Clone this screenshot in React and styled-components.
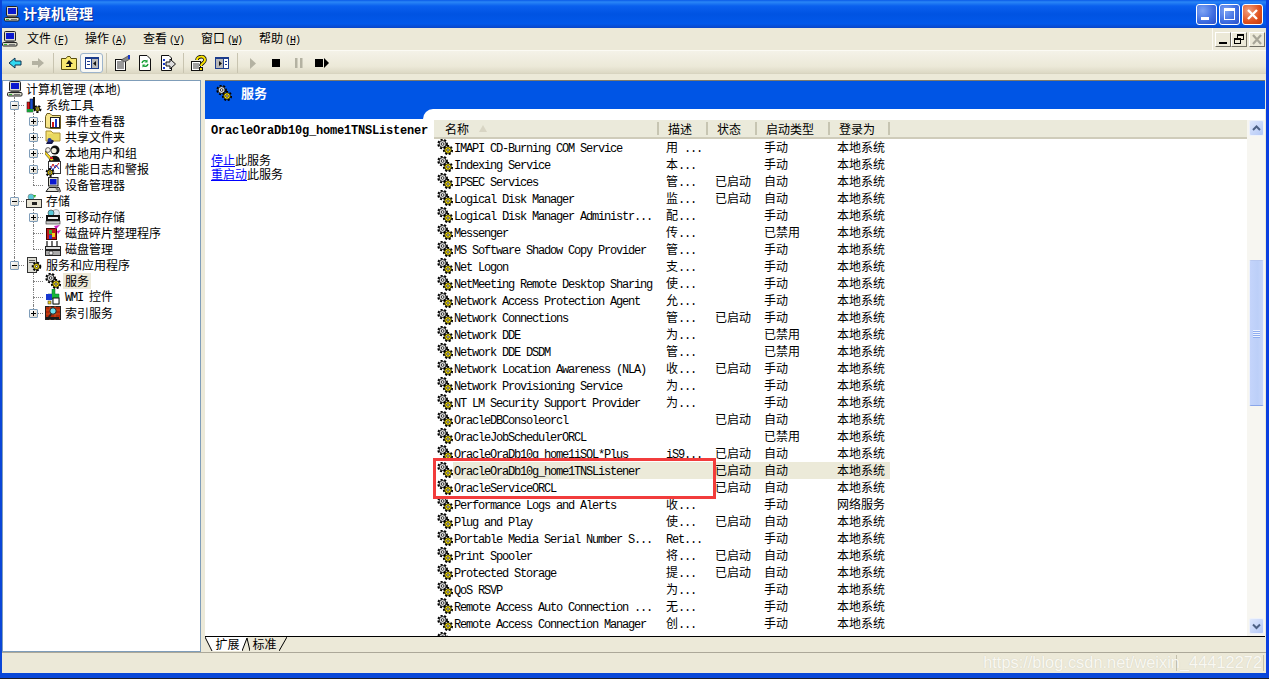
import React from "react";
import styled, { createGlobalStyle } from "styled-components";

const Global = createGlobalStyle`
  html, body { margin: 0; padding: 0; background: #1c1c24; overflow: hidden; }
  body { font-family: "Noto Sans CJK SC", "Liberation Sans", sans-serif; font-size: 12px; color: #000; }
`;

const Win = styled.div`
  width: 1269px; height: 678px; box-sizing: border-box; display: flex; flex-direction: column;
  background: #ece9d8; border-left: 2px solid #0a46d8; border-right: 3px solid #0a3fe0; border-bottom: 5px solid #0847d8;
  position: relative; overflow: hidden;
`;
const TitleBar = styled.div`
  height: 28px; margin-left: -2px; margin-right: -3px; flex: none; display: flex; align-items: center; padding: 0 6px 0 4px;
  background: linear-gradient(#0a5ae8 0, #2a86f6 2px, #0a60ee 6px, #0053e2 50%, #0258ea 85%, #0a46c8 100%);
`;
const TitleText = styled.div`
  color: #fff; font-size: 14px; font-weight: 700; line-height: 26px; margin: -2px 0 0 3px; flex: 1;
  text-shadow: 1px 1px 0 #0a2a90;
`;
const CapBtn = styled.div`
  width: 21px; height: 21px; box-sizing: border-box; margin-left: 2px; border: 1px solid #fff; border-radius: 3px;
  display: flex; align-items: center; justify-content: center;
  background: ${p => p.$close
    ? "radial-gradient(circle at 30% 30%, #f0a080, #e0501c 60%, #c03a10)"
    : "radial-gradient(circle at 30% 30%, #7ea4f4, #3d6ce0 60%, #2c50c8)"};
`;

const MenuBar = styled.div`
  height: 23px; flex: none; box-sizing: border-box; display: flex; align-items: center; border-bottom: 1px solid #fbfaf4;
`;
const MenuIconBox = styled.div`
  width: 25px; height: 16px; display: flex;
`;
const MenuItem = styled.div`
  width: 40px; margin-right: 18px; white-space: nowrap; line-height: 22px;
`;
const Mnemonic = styled.span`
  font-family: "Liberation Mono", monospace; font-size: 10px; letter-spacing: -1px; margin-left: 2px;
`;
const MenuFill = styled.div`flex: 1;`;
const MdiGroup = styled.div`
  height: 22px; display: flex; align-items: center; padding: 0 1px 0 2px; border-left: 1px solid #fbfaf4;
`;
const MdiBtn = styled.div`
  width: 16px; height: 15px; box-sizing: border-box; display: flex; align-items: center; justify-content: center;
  background: #ece9d8; border: 1px solid; border-color: #fff #716f64 #716f64 #fff;
  margin-left: ${p => p.$gap ? "2px" : "0"};
`;

const ToolBar = styled.div`
  height: 23px; flex: none; display: flex; align-items: center; padding: 2px 0 0 1px; box-sizing: border-box;
  background: linear-gradient(#f4f2e8, #ece9d8 70%, #dcd8c4);
  border-bottom: 1px solid #d8d4c0;
`;
const ToolBtn = styled.div`
  width: 23px; height: 20px; box-sizing: border-box; display: flex; align-items: center; justify-content: center;
  ${p => p.$active && "background:#f8f8f4; border:1px solid #9db4cc; border-radius:3px;"}
`;
const ToolSep = styled.div`
  width: ${p => p.$w || 8}px; height: 20px; display: flex; justify-content: center;
  &::before { content: ""; width: 1px; background: #c8c4b0; }
`;

const Panes = styled.div`
  flex: 1; min-height: 0; margin-top: 6px; display: flex; padding-right: 1px;
`;
const Tree = styled.div`
  width: 199px; flex: none; box-sizing: border-box; background: #fff; border: 1px solid #7f9db9;
  overflow: hidden;
`;
const Splitter = styled.div`width: 4px; flex: none;`;
const Right = styled.div`
  flex: 1; min-width: 0; display: flex; flex-direction: column; border-top: 1px solid #7c7a6c;
`;
const Banner = styled.div`
  height: 28px; flex: none; background: #0055e5; display: flex; align-items: center; padding-left: 11px; gap: 9px;
`;
const BannerIcon = styled.div`
  width: 16px; height: 16px; margin-top: -4px;
`;
const BannerTitle = styled.div`
  color: #fff; font-weight: 700; font-size: 13px; line-height: 26px; margin-top: -4px;
`;
const Body = styled.div`
  flex: 1; min-height: 0; display: flex; background: #0055e5;
`;
const Desc = styled.div`
  width: 218px; flex: none; background: #fff; margin-top: 10px; padding: 0 0 0 6px; box-sizing: border-box; white-space: nowrap;
  position: relative; z-index: 1;
`;
const DescTitle = styled.div`
  font-family: "Liberation Mono", monospace; font-weight: 700; font-size: 12px; letter-spacing: -0.2px; line-height: 17px; margin-top: 4px;
`;
const DescLines = styled.div`
  margin-top: 13px; line-height: 14px; font-size: 12px;
`;
const DescLine = styled.div`
  height: 14px; display: flex;
`;
const Link = styled.a`color: #0000ff; text-decoration: underline; display: block; height: 14px;`;
const ListPane = styled.div`
  flex: 1; min-width: 0; background: #fff; border-top-left-radius: 10px; padding: 11px 0 0 11px; display: flex; position: relative;
`;
const ListMain = styled.div`
  flex: 1; min-width: 0; display: flex; flex-direction: column;
`;
const Header = styled.div`
  height: 19px; flex: none; box-sizing: border-box; display: grid; grid-template-columns: 225px 49px 49px 73px 60px 1fr;
  background: #ebeadb; border-bottom: 2px solid #cfccba; 
`;
const HeadCell = styled.div`
  box-sizing: border-box; padding-left: ${p => p.$first ? 11 : 9}px; line-height: 17px; height: 17px; display: flex; align-items: center;
  border-right: ${p => p.$last ? "none" : "2px solid"}; border-image: linear-gradient(#ebeadb 3px, #c7c5b2 3px, #c7c5b2 14px, #ebeadb 14px) 1;
`;
const SortMark = styled.span`
  margin-left: 10px; width: 0; height: 0; border-left: 4px solid transparent; border-right: 4px solid transparent; border-bottom: 7px solid #d8d5c4;
`;
const Rows = styled.div`flex: 1; min-height: 0; overflow: hidden;`;
const Row = styled.div`
  height: 17px; display: grid; grid-template-columns: 19px 206px 49px 49px 73px 60px; white-space: nowrap;
`;
const RowIcon = styled.div`
  padding-left: 3px; height: 17px; background: #fff;
`;
const Cell = styled.div`
  height: 17px; line-height: 15px; padding-left: ${p => p.$pad || 1}px;
  background: ${p => p.$sel ? "#ecead9" : "transparent"};
`;
const RedBox = styled.div`
  position: absolute; left: 10px; top: 349px; width: 283px; height: 41px; box-sizing: border-box; border: 3px solid #f23c3c; pointer-events: none;
`;
const Scroll = styled.div`
  width: 18px; flex: none; display: flex; flex-direction: column; align-items: center; background: #f7f6f1; padding: 0 0 2px 0;
`;
const ScrollBtn = styled.div`
  width: 15px; height: 16px; flex: none; box-sizing: border-box; border: 1px solid #eef2fb; border-radius: 2px;
  background: linear-gradient(135deg, #dfe8fd, #b4c8f6); display: flex; align-items: center; justify-content: center;
`;
const ScrollGap = styled.div`height: ${p => p.$h}px; flex: ${p => p.$h ? "none" : 1};`;
const Thumb = styled.div`
  width: 15px; height: 146px; flex: none; box-sizing: border-box; border: 1px solid #eef2fb; border-bottom-color: #8aa6ea; border-top-color:#b8c8f0; border-radius: 2px;
  background: linear-gradient(90deg, #c4d4fb, #bccff8 60%, #c8d6fa); display: flex; flex-direction: column; align-items: center; justify-content: center; gap: 1px;
`;
const Grip = styled.i`
  display: block; width: 7px; height: 1px; background: #eef3fe; box-shadow: 0 1px 0 #8fadf0;
`;
const TabStrip = styled.div`
  height: 15px; flex: none; display: flex; border-top: 1px solid #000; background: #ece9d8;
`;
const TabA = styled.div`
  width: 29px; height: 14px; display: flex; align-items: center; justify-content: center; background: #fff; line-height: 14px;
`;
const TabB = styled.div`
  width: 29px; height: 14px; display: flex; align-items: center; justify-content: center; line-height: 14px;
`;
const Slash = styled.svg`flex: none; display: block;`;
const StatusBar = styled.div`
  height: 21px; flex: none; box-sizing: border-box; display: flex; border-top: 1px solid #aca899; background: #ece9d8;
`;
const StatusPane = styled.div`
  flex: ${p => p.$flex ? 1 : "none"}; width: ${p => p.$w || 0}px; border-right: 1px solid #c4c0ac;
  margin: 2px 2px 2px 0;
`;
const Watermark = styled.div`
  position: absolute; right: 4px; bottom: 1px; font-family: "Liberation Sans", sans-serif; font-size: 16.4px; line-height: 20px;
  color: rgba(252,251,246,.95); text-shadow: 0 0 1px rgba(150,150,135,.35); white-space: nowrap; pointer-events: none;
`;
const Latin = styled.span`
  font-family: "Liberation Mono", monospace; font-size: 12px; letter-spacing: -1.2px;
`;

const TreeRowBox = styled.div`
  height: 16px; display: flex; align-items: center; padding-left: 2px; white-space: nowrap;
`;
const Guide = styled.div`
  width: 19px; height: 16px; flex: none; position: relative;
  ${p => (p.$line === "through" || p.$line === "branch") && `
    &::before { content:""; position:absolute; left:9px; top:0; bottom:0; border-left:1px dotted #808080; }`}
  ${p => p.$line === "last" && `
    &::before { content:""; position:absolute; left:9px; top:0; height:8px; border-left:1px dotted #808080; }`}
  ${p => (p.$line === "branch" || p.$line === "last") && `
    &::after { content:""; position:absolute; left:9px; top:8px; width:10px; border-top:1px dotted #808080; }`}
`;
const Exp = styled.div`
  position: absolute; left: 5px; top: 4px; width: 9px; height: 9px; box-sizing: border-box; border: 1px solid #7f9db9; border-radius: 1px; background: linear-gradient(135deg, #fff, #dcd8cc); z-index: 1;
  display: flex; align-items: center; justify-content: center;
`;
const IconBox = styled.div`
  width: 16px; height: 16px; flex: none; margin-left: 2px;
`;
const TreeLabel = styled.div`
  line-height: 16px; padding: 0 ${p => p.$sel ? "2px" : "0"}; margin-left: ${p => p.$sel ? "2px" : (p.$m ?? 4) + "px"};
  background: ${p => p.$sel ? "#ece9d8" : "transparent"};
`;

const Sv = ({ s = 16, children, w, h }) => (
  <svg width={w || s} height={h || s} viewBox={`0 0 ${w || s} ${h || s}`} style={{ display: "block" }}>{children}</svg>
);

const Computer = () => (
  <Sv>
    <rect x="2.5" y="0.5" width="11" height="9.5" rx="1" fill="#d8d8d0" stroke="#222" />
    <rect x="4" y="2" width="8" height="6" fill="#0a18d0" />
    <rect x="4" y="10" width="8" height="1" fill="#555" />
    <rect x="0.5" y="11.5" width="14.5" height="3.5" rx="1" fill="#d8d8c8" stroke="#222" />
    <rect x="2" y="13" width="3" height="1" fill="#3a3" />
    <rect x="7" y="13" width="6" height="1" fill="#777" />
  </Sv>
);
const Cog = ({ cx, cy, r, fill }) => (
  <g>
    <circle cx={cx} cy={cy} r={r + 0.6} fill="none" stroke="#000" strokeWidth="2.4" strokeDasharray="1.9 1.5" />
    <circle cx={cx} cy={cy} r={r} fill={fill} stroke="#111" strokeWidth="0.9" />
    <circle cx={cx} cy={cy} r={r * 0.38} fill="#fff" stroke="#111" strokeWidth="0.8" />
  </g>
);
const Gears = () => (
  <Sv>
    <Cog cx={5.6} cy={5} r={3.5} fill="#d8d8d8" />
    <Cog cx={11} cy={11} r={3.3} fill="#ffe600" />
  </Sv>
);
const Tools = () => (
  <Sv>
    <rect x="1" y="5" width="3" height="10" fill="#d81818" stroke="#000" strokeWidth=".5" />
    <rect x="4" y="2" width="3" height="13" fill="#1a50d0" stroke="#000" strokeWidth=".5" />
    <rect x="7" y="0" width="2" height="12" fill="#111" />
    <rect x="1" y="12" width="6" height="3" fill="#18a038" />
    <Cog cx={11.5} cy={12} r={2.2} fill="#ffe600" />
  </Sv>
);
const EventView = () => (
  <Sv>
    <path d="M0.5 3.5 L0.5 14.5 L6 15.5 L15.5 15.5 L15.5 2.5 L7 2.5 L5 0.5 L2 0.5 Z" fill="#f6e58a" stroke="#6a5a20" />
    <rect x="5.5" y="4.5" width="9" height="10" fill="#fff" stroke="#222" />
    <rect x="7" y="9" width="2" height="5" fill="#d01818" />
    <rect x="10" y="6" width="2" height="8" fill="#1838c8" />
  </Sv>
);
const Share = () => (
  <Sv>
    <path d="M1 2 L6 2 L8 4 L15 4 L15 12 L1 12 Z" fill="#f6e070" stroke="#a89030" />
    <rect x="3" y="5" width="11" height="6" fill="#e8d860" />
    <path d="M1 15 C3 10 7 10 9 12 L7 15 Z" fill="#16184a" />
    <circle cx="4.5" cy="11" r="2" fill="#2038a0" />
  </Sv>
);
const Users = () => (
  <Sv>
    <circle cx="10" cy="5" r="4.5" fill="#111" />
    <circle cx="9" cy="5.5" r="2.6" fill="#f4f0e0" />
    <path d="M4 16 C4 9 15 9 15 16 Z" fill="#111" />
    <path d="M0 6 L9 15 L6 16 L0 9 Z" fill="#f0d020" stroke="#222" strokeWidth=".5" />
    <circle cx="3" cy="5" r="2.4" fill="#f8f4ec" stroke="#222" strokeWidth=".7" />
    <rect x="5" y="12" width="3" height="2" fill="#d02020" />
  </Sv>
);
const Perf = () => (
  <Sv>
    <rect x="3.5" y="0.5" width="12" height="12" fill="#fff" stroke="#333" />
    <path d="M5 9 L8 3 L10 7 L14 2" stroke="#d01818" strokeWidth="1" fill="none" />
    <path d="M5 5 L8 9 L11 4 L14 8" stroke="#1838c8" strokeWidth="1" fill="none" />
    <Cog cx={5} cy={11.5} r={2.6} fill="#ffe600" />
  </Sv>
);
const Device = () => (
  <Sv>
    <rect x="3.5" y="0.5" width="9.5" height="8.5" fill="#d8d8d0" stroke="#222" />
    <rect x="5" y="2" width="6.5" height="5.5" fill="#0a18d0" />
    <path d="M1 14.5 L4 10.5 L14 10.5 L15.5 14.5 Z" fill="#e0e0d8" stroke="#222" />
    <path d="M11 11 L15 15" stroke="#777" strokeWidth="2" />
  </Sv>
);
const Storage = () => (
  <Sv>
    <circle cx="5" cy="4" r="3" fill="#58c8d8" stroke="#777" strokeWidth=".6" />
    <path d="M7 2 L10 2 L9 5 Z" fill="#30b030" />
    <rect x="0.5" y="6.5" width="15" height="8" fill="#e8e4d4" stroke="#333" />
    <rect x="6" y="9" width="5" height="3" fill="#222" />
  </Sv>
);
const Removable = () => (
  <Sv>
    <circle cx="11" cy="4" r="3.5" fill="#e0e8f0" stroke="#777" strokeWidth=".6" />
    <circle cx="6" cy="4" r="3" fill="#58c8d8" stroke="#333" strokeWidth=".6" />
    <rect x="1" y="6" width="14" height="6" fill="#111" />
    <rect x="3" y="8" width="10" height="2" fill="#eee" />
    <rect x="1" y="12" width="14" height="3" fill="#ccc" stroke="#222" strokeWidth=".6" />
  </Sv>
);
const Defrag = () => (
  <Sv>
    <rect x="1.5" y="3.5" width="10" height="11" fill="#c01818" stroke="#400" />
    <rect x="4" y="5" width="3" height="4" fill="#38b038" />
    <rect x="7" y="8" width="3" height="4" fill="#f0d020" />
    <rect x="4" y="10" width="3" height="4" fill="#2838c8" />
    <path d="M9 1 L15 0 L11 4 Z M12 6 L16 5 L13 9 Z" fill="#d020c0" />
  </Sv>
);
const DiskMgr = () => (
  <Sv>
    <path d="M2 0 L2 6 M7 0 L7 6 M12 0 L12 6" stroke="#111" strokeWidth="1.2" />
    <rect x="0.5" y="5.5" width="15" height="3" fill="#ddd" stroke="#222" />
    <rect x="0.5" y="9.5" width="15" height="5" fill="#aaa" stroke="#222" />
    <circle cx="6" cy="12" r="2" fill="#eee" stroke="#222" strokeWidth=".6" />
  </Sv>
);
const SvcApps = () => (
  <Sv>
    <rect x="1.5" y="0.5" width="9" height="15" fill="#dcdcd4" stroke="#333" />
    <rect x="3" y="3" width="6" height="1" fill="#555" />
    <rect x="3" y="5" width="6" height="1" fill="#555" />
    <Cog cx={10.5} cy={9.5} r={3} fill="#ffe600" />
  </Sv>
);
const Wmi = () => (
  <Sv>
    <path d="M7 0 L10 0 L10 5 L14 5 L14 15 L8 15 L8 10 L3 10 L3 5 L7 5 Z" fill="#18b838" stroke="#063" strokeWidth=".5" />
    <rect x="1" y="5" width="6" height="6" fill="#1838d0" />
    <rect x="8" y="9" width="6" height="6" fill="#fff" stroke="#111" />
    <rect x="3" y="12" width="3" height="3" fill="#f0d020" stroke="#222" strokeWidth=".5" />
  </Sv>
);
const Index = () => (
  <Sv>
    <rect x="0.5" y="1.5" width="15" height="13" fill="#b02808" stroke="#222" />
    <path d="M1 5 H15 M1 9 H15 M5 1 V15 M10 1 V15" stroke="#e06020" strokeWidth=".7" />
    <circle cx="8" cy="6" r="3.2" fill="#70e0f0" stroke="#222" />
    <path d="M3 14 L6 9" stroke="#222" strokeWidth="2" />
    <rect x="1" y="12" width="13" height="2" fill="#1a1a1a" />
  </Sv>
);

const Arrow = ({ fill, stroke, flip }) => (
  <Sv>
    <path d={flip ? "M2 6 H8 V3 L14 8 L8 13 V10 H2 Z" : "M14 6 H8 V3 L2 8 L8 13 V10 H14 Z"} fill={fill} stroke={stroke} />
  </Sv>
);
const UpFolder = () => (
  <Sv>
    <path d="M0.5 3.5 L5 3.5 L6.5 1.5 L9 1.5 L10 3.5 L15.5 3.5 L15.5 14.5 L0.5 14.5 Z" fill="#f8e870" stroke="#5a5010" />
    <path d="M8 5 L12 9 L10 9 L10 12 L5 12 L5 11 L8 11 L8 9 L5 9 Z" fill="#111" />
  </Sv>
);
const TreeToggle = () => (
  <Sv>
    <rect x="1" y="2" width="14" height="12" fill="#1c3c8c" />
    <rect x="2" y="4" width="5" height="9" fill="#fff" />
    <rect x="8" y="4" width="6" height="9" fill="#b8b8b8" />
    <path d="M12 6 L9 8.5 L12 11 Z" fill="#111" />
    <rect x="3" y="6" width="3" height="1" fill="#1c3c8c" />
    <rect x="3" y="9" width="3" height="1" fill="#1c3c8c" />
  </Sv>
);
const Props = () => (
  <Sv>
    <rect x="1.5" y="4.5" width="10" height="11" fill="#fff" stroke="#111" />
    <path d="M3 7 H10 M3 9 H10 M3 11 H10 M3 13 H10" stroke="#333" />
    <path d="M7 5 L14 1 L16 2 L16 4 L11 7 Z" fill="#888" stroke="#222" strokeWidth=".5" />
    <rect x="14" y="0" width="2" height="4" fill="#1838c8" />
  </Sv>
);
const Refresh = () => (
  <Sv>
    <path d="M2.5 0.5 H10 L13.5 4 V15.5 H2.5 Z" fill="#fff" stroke="#111" />
    <path d="M5 8 A3 3 0 0 1 10 6.5 M11 9 A3 3 0 0 1 6 10.5" stroke="#18a038" strokeWidth="1.4" fill="none" />
    <path d="M10.5 4.5 V7.5 H7.5 Z M5.5 12.5 V9.5 H8.5 Z" fill="#18a038" />
  </Sv>
);
const Export = () => (
  <Sv>
    <path d="M1.5 0.5 H9 L11.5 3 V15.5 H1.5 Z" fill="#fff" stroke="#111" />
    <rect x="3" y="4" width="2" height="2" fill="#1838c8" />
    <rect x="3" y="8" width="2" height="2" fill="#1838c8" />
    <rect x="3" y="12" width="2" height="2" fill="#1838c8" />
    <path d="M6 7 H10 V4 L15.5 9 L10 14 V11 H6 Z" fill="#ddd" stroke="#111" />
  </Sv>
);
const Help = () => (
  <Sv>
    <rect x="0.5" y="6.5" width="9" height="9" fill="#fff" stroke="#111" />
    <path d="M2 9 H8 M2 11 H8 M2 13 H8" stroke="#444" />
    <path d="M6 5 C6 1 14 0 14 5 C14 8 10 8 10 11" fill="none" stroke="#111" strokeWidth="3.6" />
    <path d="M6 5 C6 1 14 0 14 5 C14 8 10 8 10 11" fill="none" stroke="#fbe400" strokeWidth="2" />
    <rect x="8.5" y="12.5" width="3" height="3" fill="#fbe400" stroke="#111" />
  </Sv>
);
const Mmc = () => (
  <Sv>
    <rect x="1" y="2" width="14" height="12" fill="#1c3c8c" />
    <rect x="2" y="4" width="7" height="9" fill="#b8b8b8" />
    <rect x="10" y="4" width="4" height="9" fill="#fff" />
    <path d="M5 6 L8 8.5 L5 11 Z" fill="#111" />
    <rect x="11" y="6" width="2" height="1" fill="#1c3c8c" />
    <rect x="11" y="9" width="2" height="1" fill="#1c3c8c" />
  </Sv>
);
const Play = () => <Sv><path d="M5 3 L11 8.5 L5 14 Z" fill="#b4b2a2" /></Sv>;
const Stop = () => <Sv><rect x="4" y="4" width="8" height="8" fill="#000" /></Sv>;
const Pause = () => <Sv><rect x="4" y="3" width="2.5" height="10" fill="#b4b2a2" /><rect x="9" y="3" width="2.5" height="10" fill="#b4b2a2" /></Sv>;
const Step = () => <Sv><rect x="1" y="4" width="8" height="8" fill="#000" /><path d="M10 3 L15 8 L10 13 Z" fill="#000" /></Sv>;

const split = t => t.split(/([\x20-\x7e]+)/).filter(Boolean);
const Mixed = ({ t }) => split(t).map((p, i) => /^[\x20-\x7e]+$/.test(p) ? <Latin key={i}>{p}</Latin> : <React.Fragment key={i}>{p}</React.Fragment>);

const tree = [
  { t: "系统工具", g: [["branch", "-"]], I: Tools },
  { t: "事件查看器", g: [["through"], ["branch", "+"]], I: EventView },
  { t: "共享文件夹", g: [["through"], ["branch", "+"]], I: Share },
  { t: "本地用户和组", g: [["through"], ["branch", "+"]], I: Users },
  { t: "性能日志和警报", g: [["through"], ["branch", "+"]], I: Perf },
  { t: "设备管理器", g: [["through"], ["last"]], I: Device },
  { t: "存储", g: [["branch", "-"]], I: Storage },
  { t: "可移动存储", g: [["through"], ["branch", "+"]], I: Removable },
  { t: "磁盘碎片整理程序", g: [["through"], ["branch"]], I: Defrag },
  { t: "磁盘管理", g: [["through"], ["last"]], I: DiskMgr },
  { t: "服务和应用程序", g: [["last", "-"]], I: SvcApps },
  { t: "服务", g: [[""], ["branch"]], I: Gears, sel: true },
  { t: "WMI 控件", g: [[""], ["branch"]], I: Wmi },
  { t: "索引服务", g: [[""], ["last", "+"]], I: Index },
];

const S = "本地系统";
const rows = [
  ["IMAPI CD-Burning COM Service", "用 ...", "", "手动", S],
  ["Indexing Service", "本...", "", "手动", S],
  ["IPSEC Services", "管...", "已启动", "自动", S],
  ["Logical Disk Manager", "监...", "已启动", "自动", S],
  ["Logical Disk Manager Administr...", "配...", "", "手动", S],
  ["Messenger", "传...", "", "已禁用", S],
  ["MS Software Shadow Copy Provider", "管...", "", "手动", S],
  ["Net Logon", "支...", "", "手动", S],
  ["NetMeeting Remote Desktop Sharing", "使...", "", "手动", S],
  ["Network Access Protection Agent", "允...", "", "手动", S],
  ["Network Connections", "管...", "已启动", "手动", S],
  ["Network DDE", "为...", "", "已禁用", S],
  ["Network DDE DSDM", "管...", "", "已禁用", S],
  ["Network Location Awareness (NLA)", "收...", "已启动", "手动", S],
  ["Network Provisioning Service", "为...", "", "手动", S],
  ["NT LM Security Support Provider", "为...", "", "手动", S],
  ["OracleDBConsoleorcl", "", "已启动", "自动", S],
  ["OracleJobSchedulerORCL", "", "", "已禁用", S],
  ["OracleOraDb10g_home1iSQL*Plus", "iS9...", "已启动", "自动", S],
  ["OracleOraDb10g_home1TNSListener", "", "已启动", "自动", S, true],
  ["OracleServiceORCL", "", "已启动", "自动", S],
  ["Performance Logs and Alerts", "收...", "", "手动", "网络服务"],
  ["Plug and Play", "使...", "已启动", "自动", S],
  ["Portable Media Serial Number S...", "Ret...", "", "手动", S],
  ["Print Spooler", "将...", "已启动", "自动", S],
  ["Protected Storage", "提...", "已启动", "自动", S],
  ["QoS RSVP", "为...", "", "手动", S],
  ["Remote Access Auto Connection ...", "无...", "", "手动", S],
  ["Remote Access Connection Manager", "创...", "", "手动", S],
  ["", "", "", "", ""],
];

const menus = [["文件", "F"], ["操作", "A"], ["查看", "V"], ["窗口", "W"], ["帮助", "H"]];

export default function App() {
  return (
    <>
      <Global />
      <Win>
        <TitleBar>
          <Computer />
          <TitleText>计算机管理</TitleText>
          <CapBtn><Sv s={19}><rect x="4" y="12" width="8" height="3" fill="#fff" /></Sv></CapBtn>
          <CapBtn><Sv s={19}><rect x="4.5" y="3.5" width="10" height="11" fill="none" stroke="#fff" /><rect x="4" y="3" width="11" height="3" fill="#fff" /></Sv></CapBtn>
          <CapBtn $close><Sv s={19}><path d="M5 5 L14 14 M14 5 L5 14" stroke="#fff" strokeWidth="2.4" /></Sv></CapBtn>
        </TitleBar>
        <MenuBar>
          <MenuIconBox><Computer /></MenuIconBox>
          {menus.map(([a, b]) => (
            <MenuItem key={b}>{a}<Mnemonic>(<u>{b}</u>)</Mnemonic></MenuItem>
          ))}
          <MenuFill />
          <MdiGroup>
            <MdiBtn><Sv w={14} h={13}><rect x="3" y="9" width="8" height="2" fill="#000" /></Sv></MdiBtn>
            <MdiBtn><Sv w={14} h={13}><rect x="5.5" y="1.5" width="6" height="5" fill="#ece9d8" stroke="#000" /><rect x="2.5" y="5.5" width="6" height="5" fill="#ece9d8" stroke="#000" /><rect x="5" y="1" width="7" height="2" fill="#000" /><rect x="2" y="5" width="7" height="2" fill="#000" /></Sv></MdiBtn>
            <MdiBtn $gap><Sv w={14} h={13}><path d="M3 2 L11 11 M11 2 L3 11" stroke="#a8a698" strokeWidth="2.2" /></Sv></MdiBtn>
          </MdiGroup>
        </MenuBar>
        <ToolBar>
          <ToolBtn><Arrow fill="#30d8f0" stroke="#103050" /></ToolBtn>
          <ToolBtn><Arrow fill="#b4b2a2" flip /></ToolBtn>
          <ToolSep />
          <ToolBtn><UpFolder /></ToolBtn>
          <ToolBtn $active><TreeToggle /></ToolBtn>
          <ToolSep $w={7} />
          <ToolBtn><Props /></ToolBtn>
          <ToolBtn><Refresh /></ToolBtn>
          <ToolBtn><Export /></ToolBtn>
          <ToolSep />
          <ToolBtn><Help /></ToolBtn>
          <ToolBtn><Mmc /></ToolBtn>
          <ToolSep />
          <ToolBtn><Play /></ToolBtn>
          <ToolBtn><Stop /></ToolBtn>
          <ToolBtn><Pause /></ToolBtn>
          <ToolBtn><Step /></ToolBtn>
        </ToolBar>
        <Panes>
          <Tree>
            <TreeRowBox>
              <IconBox><Computer /></IconBox>
              <TreeLabel $m={3}>计算机管理 (本地)</TreeLabel>
            </TreeRowBox>
            {tree.map(n => (
              <TreeRowBox key={n.t}>
                {n.g.map(([line, e], i) => (
                  <Guide key={i} $line={line}>
                    {e && (
                      <Exp>
                        <Sv s={7}>
                          <rect x="1" y="3" width="5" height="1" fill="#000" />
                          {e === "+" && <rect x="3" y="1" width="1" height="5" fill="#000" />}
                        </Sv>
                      </Exp>
                    )}
                  </Guide>
                ))}
                <IconBox><n.I /></IconBox>
                <TreeLabel $sel={n.sel}><Mixed t={n.t} /></TreeLabel>
              </TreeRowBox>
            ))}
          </Tree>
          <Splitter />
          <Right>
            <Banner>
              <BannerIcon><Gears /></BannerIcon>
              <BannerTitle>服务</BannerTitle>
            </Banner>
            <Body>
              <Desc>
                <DescTitle>OracleOraDb10g_home1TNSListener</DescTitle>
                <DescLines>
                  <DescLine><Link>停止</Link><span>此服务</span></DescLine>
                  <DescLine><Link>重启动</Link><span>此服务</span></DescLine>
                </DescLines>
              </Desc>
              <ListPane>
                <ListMain>
                  <Header>
                    <HeadCell $first>名称<SortMark /></HeadCell>
                    <HeadCell>描述</HeadCell>
                    <HeadCell>状态</HeadCell>
                    <HeadCell>启动类型</HeadCell>
                    <HeadCell>登录为</HeadCell>
                    <HeadCell $last />
                  </Header>
                  <Rows>
                    {rows.map((r, i) => (
                      <Row key={i}>
                        <RowIcon><Gears /></RowIcon>
                        <Cell $sel={r[5]}><Mixed t={r[0]} /></Cell>
                        <Cell $sel={r[5]} $pad={7}><Mixed t={r[1]} /></Cell>
                        <Cell $sel={r[5]} $pad={7}>{r[2]}</Cell>
                        <Cell $sel={r[5]} $pad={7}>{r[3]}</Cell>
                        <Cell $sel={r[5]} $pad={7}>{r[4]}</Cell>
                      </Row>
                    ))}
                  </Rows>
                </ListMain>
                <Scroll>
                  <ScrollBtn><Sv w={13} h={14}><path d="M3 9 L6.5 5.5 L10 9" fill="none" stroke="#4d6185" strokeWidth="2" /></Sv></ScrollBtn>
                  <ScrollGap $h={124} />
                  <Thumb><Grip /><Grip /><Grip /><Grip /></Thumb>
                  <ScrollGap />
                  <ScrollBtn><Sv w={13} h={14}><path d="M3 5.5 L6.5 9 L10 5.5" fill="none" stroke="#4d6185" strokeWidth="2" /></Sv></ScrollBtn>
                </Scroll>
                <RedBox />
              </ListPane>
            </Body>
            <TabStrip>
              <Slash width="8" height="14"><path d="M0 0 L8 0 L8 14 L7 14 Z" fill="#fff" /><path d="M0 0 L7 14" stroke="#000" /></Slash>
              <TabA>扩展</TabA>
              <Slash width="8" height="14"><path d="M0 0 L5 0 L0 14 Z" fill="#fff" /><path d="M0 14 L5 1 L8 14" stroke="#000" fill="none" /></Slash>
              <TabB>标准</TabB>
              <Slash width="8" height="14"><path d="M0 14 L8 0" stroke="#000" /></Slash>
            </TabStrip>
          </Right>
        </Panes>
        <StatusBar>
          <StatusPane $flex />
          <StatusPane $w={84} />
        </StatusBar>
        <Watermark>https://blog.csdn.net/weixin_44412272</Watermark>
      </Win>
    </>
  );
}
